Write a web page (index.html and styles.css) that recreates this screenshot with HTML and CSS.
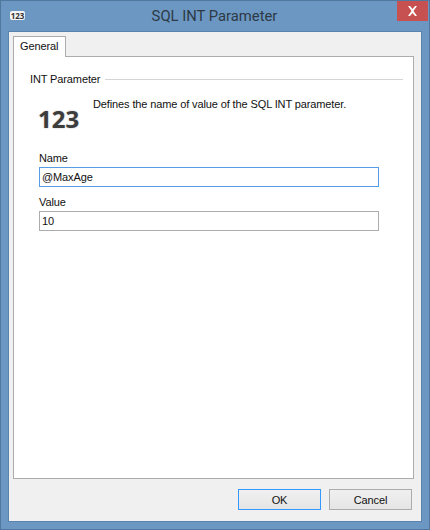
FILE: index.html
```html
<!DOCTYPE html>
<html lang="en">
<head>
  <meta charset="UTF-8">
  <title>SQL INT Parameter</title>
  <link rel="stylesheet" href="styles.css">
</head>
<body>
  <div class="window">
    <div class="titlebar">
      <span class="app-icon">123</span>
      <span class="title">SQL INT Parameter</span>
      <div class="close-btn">
        <svg width="11" height="10" viewBox="0 0 11 10">
          <path d="M1 0h2l2.500 3 2.500-3h2l-3.500 5 3.500 5h-2l-2.500-3-2.500 3h-2l3.500-5z" fill="#fff"/>
        </svg>
      </div>
    </div>

    <div class="client">
      <div class="tabs">
        <div class="tab">General</div>
      </div>

      <div class="tab-panel">
        <div class="group-head">
          <span>INT Parameter</span>
          <div class="group-line"></div>
        </div>

        <div class="intro">
          <div class="big-icon">123</div>
          <div class="intro-text">Defines the name of value of the SQL INT parameter.</div>
        </div>

        <div class="field">
          <label>Name</label>
          <input type="text" class="focused" value="@MaxAge">
        </div>
        <div class="field">
          <label>Value</label>
          <input type="text" value="10">
        </div>
      </div>

      <div class="buttons">
        <button class="default-btn">OK</button>
        <button>Cancel</button>
      </div>
    </div>
  </div>
</body>
</html>
```

FILE: styles.css
```css
* {
  box-sizing: border-box;
}

html, body {
  margin: 0;
  height: 100%;
}

body {
  font-family: "Liberation Sans", Arial, sans-serif;
  font-size: 11px;
  letter-spacing: -0.120px;
  color: #111;
}

.window {
  width: 430px;
  height: 530px;
  display: flex;
  flex-direction: column;
  background: #6b97c2;
  border: 1px solid #50789f;
  padding: 0 7px 7px;
}

.titlebar {
  height: 30px;
  flex: none;
  position: relative;
  display: flex;
  align-items: center;
  justify-content: center;
}

.app-icon {
  position: absolute;
  left: 2px;
  top: 10px;
  width: 15px;
  height: 9px;
  background: #f4f4f4;
  border-radius: 2px;
  font-family: "Open Sans", sans-serif;
  font-size: 8px;
  font-weight: 700;
  letter-spacing: 0;
  line-height: 9px;
  text-align: center;
  color: #333;
}

.title {
  font-family: Roboto, sans-serif;
  font-size: 14.800px;
  letter-spacing: 0;
  color: #2d3a46;
  margin-left: -1px;
}

.close-btn {
  position: absolute;
  right: -6px;
  top: 0;
  width: 31px;
  height: 20px;
  background: #c75050;
  display: flex;
  align-items: center;
  justify-content: center;
}

.client {
  flex: 1;
  display: flex;
  flex-direction: column;
  background: #f0f0f0;
  border: 1px solid #5a84ad;
  padding: 4px 7px 0 4px;
}

.tabs {
  display: flex;
  height: 20px;
  flex: none;
  position: relative;
  z-index: 1;
}

.tab {
  width: 53px;
  height: 21px;
  background: #fff;
  border: 1px solid #acacac;
  border-bottom: none;
  padding: 1px 0 0 6px;
  line-height: 17px;
}

.tab-panel {
  height: 423px;
  flex: none;
  background: #fff;
  border: 1px solid #acacac;
  padding: 14px 10px 0 16px;
}

.group-head {
  display: flex;
  align-items: center;
  gap: 5px;
  height: 16px;
}

.group-line {
  flex: 1;
  height: 1px;
  background: #d5d5d5;
}

.intro {
  display: flex;
  height: 61px;
  padding-left: 8px;
}

.big-icon {
  width: 55px;
  padding-top: 17px;
  font-family: "Open Sans", sans-serif;
  font-size: 24px;
  font-weight: 700;
  letter-spacing: 0;
  line-height: 30px;
  color: #3c3c3c;
  text-shadow: 0 0 2px #bbb;
}

.intro-text {
  padding-top: 9px;
  line-height: 16px;
}

.field {
  width: 340px;
  margin-left: 9px;
  height: 44px;
  padding-top: 3px;
}

.field label {
  display: block;
  height: 16px;
  line-height: 14px;
}

.field input {
  display: block;
  width: 100%;
  height: 20px;
  border: 1px solid #acacac;
  padding: 0 2px;
  font: inherit;
  letter-spacing: inherit;
  color: #111;
  background: #fff;
  outline: none;
}

.field input.focused {
  border-color: #569de5;
}

.buttons {
  display: flex;
  justify-content: flex-end;
  gap: 8px;
  padding-top: 10px;
  padding-right: 2px;
}

.buttons button {
  width: 83px;
  height: 21px;
  padding: 0;
  border: 1px solid #acacac;
  background: linear-gradient(#f0f0f0, #e5e5e5);
  font: inherit;
  letter-spacing: inherit;
  color: #111;
}

.buttons .default-btn {
  border-color: #3399ff;
}
```
